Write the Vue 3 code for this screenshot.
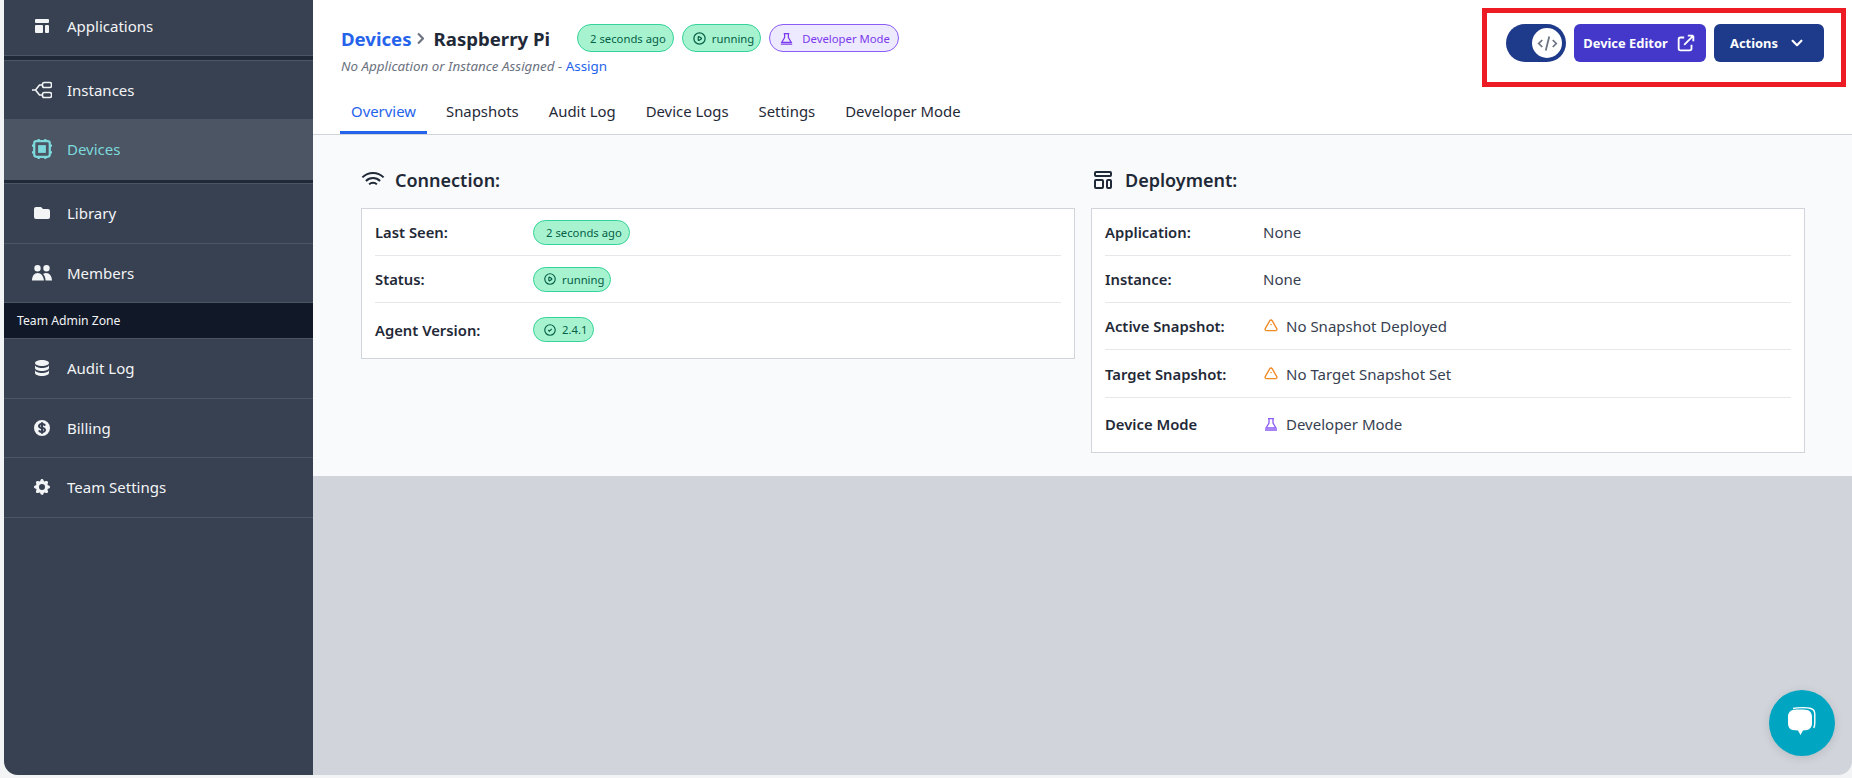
<script setup>
const icons = {
  template: ['M3 4a1 1 0 011-1h12a1 1 0 011 1v2a1 1 0 01-1 1H4a1 1 0 01-1-1V4zM3 10a1 1 0 011-1h6a1 1 0 011 1v6a1 1 0 01-1 1H4a1 1 0 01-1-1v-6zM14 9a1 1 0 00-1 1v6a1 1 0 001 1h2a1 1 0 001-1v-6a1 1 0 00-1-1h-2z'],
  folder: ['M2 6a2 2 0 012-2h5l2 2h5a2 2 0 012 2v6a2 2 0 01-2 2H4a2 2 0 01-2-2V6z'],
  users: [
    'M5.500 2a3.200 3.200 0 100 6.400 3.200 3.200 0 000-6.400zM14.500 2a3.200 3.200 0 100 6.400 3.200 3.200 0 000-6.400z',
    'M0 17.500c0-4.500 2.300-7.500 5.700-7.500s5.800 3 6.300 7.500zM13.600 17.500c-.2-2.800-1-5-2.500-6.600.9-.6 2-.9 3.100-.9 3.200 0 5.800 3 5.800 7.500z'
  ],
  database: [
    'M3 12v3c0 1.657 3.134 3 7 3s7-1.343 7-3v-3c0 1.657-3.134 3-7 3s-7-1.343-7-3z',
    'M3 7v3c0 1.657 3.134 3 7 3s7-1.343 7-3V7c0 1.657-3.134 3-7 3S3 8.657 3 7z',
    'M17 5c0 1.657-3.134 3-7 3S3 6.657 3 5s3.134-3 7-3 7 1.343 7 3z'
  ],
  dollar: [
    'M8.433 7.418c.155-.103.346-.196.567-.267v1.698a2.305 2.305 0 01-.567-.267C8.07 8.34 8 8.114 8 8c0-.114.07-.34.433-.582zM11 12.849v-1.698c.22.071.412.164.567.267.364.243.433.468.433.582 0 .114-.07.34-.433.582a2.305 2.305 0 01-.567.267z',
    'M10 18a8 8 0 100-16 8 8 0 000 16zm1-13a1 1 0 10-2 0v.092a4.535 4.535 0 00-1.676.662C6.602 6.234 6 7.009 6 8c0 .99.602 1.765 1.324 2.246.48.32 1.054.545 1.676.662v1.941c-.391-.127-.68-.317-.843-.504a1 1 0 10-1.51 1.31c.562.649 1.413 1.076 2.353 1.253V15a1 1 0 102 0v-.092a4.535 4.535 0 001.676-.662C13.398 13.766 14 12.991 14 12c0-.99-.602-1.765-1.324-2.246A4.535 4.535 0 0011 9.092V7.151c.391.127.68.317.843.504a1 1 0 101.511-1.31c-.563-.649-1.413-1.076-2.354-1.253V5z'
  ],
  cog: ['M11.49 3.17c-.38-1.56-2.6-1.56-2.98 0a1.532 1.532 0 01-2.286.948c-1.372-.836-2.942.734-2.106 2.106.54.886.061 2.042-.947 2.287-1.561.379-1.561 2.6 0 2.978a1.532 1.532 0 01.947 2.287c-.836 1.372.734 2.942 2.106 2.106a1.532 1.532 0 012.287.947c.379 1.561 2.6 1.561 2.978 0a1.533 1.533 0 012.287-.947c1.372.836 2.942-.734 2.106-2.106a1.533 1.533 0 01.947-2.287c1.561-.379 1.561-2.6 0-2.978a1.532 1.532 0 01-.947-2.287c.836-1.372-.734-2.942-2.106-2.106a1.532 1.532 0 01-2.287-.947zM10 13a3 3 0 100-6 3 3 0 000 6z']
}

const play = ['M14.752 11.168l-3.197-2.132A1 1 0 0010 9.87v4.263a1 1 0 001.555.832l3.197-2.132a1 1 0 000-1.664z', 'M21 12a9 9 0 11-18 0 9 9 0 0118 0z']
const check = ['M9 12l2 2 4-4m6 2a9 9 0 11-18 0 9 9 0 0118 0z']
const flask = ['M7.500 4h9M9 4v6.500L4.500 18h15L15 10.500V4M3 21h18']
const warn = ['M12 9v2m0 4h.01m-6.938 4h13.856c1.54 0 2.502-1.667 1.732-3L13.732 4c-.77-1.333-2.694-1.333-3.464 0L3.34 16c-.77 1.333.192 3 1.732 3z']

const tabs = ['Overview', 'Snapshots', 'Audit Log', 'Device Logs', 'Settings', 'Developer Mode']
const lowerNav = [
  { label: 'Library', icon: 'folder' },
  { label: 'Members', icon: 'users', size: 'short' }
]
const adminNav = [
  { label: 'Audit Log', icon: 'database' },
  { label: 'Billing', icon: 'dollar', size: 'short' },
  { label: 'Team Settings', icon: 'cog' }
]
const deployRows = [
  { label: 'Application:', value: 'None' },
  { label: 'Instance:', value: 'None' },
  { label: 'Active Snapshot:', value: 'No Snapshot Deployed', icon: warn, tone: 'warn' },
  { label: 'Target Snapshot:', value: 'No Target Snapshot Set', icon: warn, tone: 'warn', cls: 'tall' },
  { label: 'Device Mode', value: 'Developer Mode', icon: flask, tone: 'dev', cls: 'last snug' }
]
</script>

<template>
  <div class="screen">
    <aside class="sidebar">
      <a class="nav-item first">
        <svg class="nav-icon" viewBox="0 0 20 20" fill="currentColor"><path v-for="d in icons.template" :key="d" :d="d" fill-rule="evenodd" /></svg>
        Applications
      </a>
      <div class="nav-gap"></div>
      <a class="nav-item instances">
        <svg class="nav-icon" viewBox="0 0 20 20" fill="none" stroke="currentColor" stroke-width="1.600"><path d="M0 10h3.500l4-5h3M3.500 10l4 5h3" /><rect x="10.500" y="2.500" width="9" height="5" rx="1.800" /><rect x="10.500" y="12.500" width="9" height="5" rx="1.800" /></svg>
        Instances
      </a>
      <a class="nav-item active">
        <svg class="nav-icon" viewBox="3 3 18 18" fill="none" stroke="currentColor" stroke-width="2"><path d="M9 3v2m6-2v2M9 19v2m6-2v2M5 9H3m2 6H3m18-6h-2m2 6h-2M7 19h10a2 2 0 002-2V7a2 2 0 00-2-2H7a2 2 0 00-2 2v10a2 2 0 002 2z" /><rect x="8.500" y="8.500" width="7" height="7" fill="currentColor" stroke="none" /></svg>
        Devices
      </a>
      <div class="nav-gap thin"></div>
      <a v-for="item in lowerNav" :key="item.label" class="nav-item" :class="item.size">
        <svg class="nav-icon" viewBox="0 0 20 20" fill="currentColor"><path v-for="d in icons[item.icon]" :key="d" :d="d" fill-rule="evenodd" /></svg>
        {{ item.label }}
      </a>
      <div class="zone">Team Admin Zone</div>
      <a v-for="item in adminNav" :key="item.label" class="nav-item" :class="item.size">
        <svg class="nav-icon" viewBox="0 0 20 20" fill="currentColor"><path v-for="d in icons[item.icon]" :key="d" :d="d" fill-rule="evenodd" /></svg>
        {{ item.label }}
      </a>
    </aside>

    <main class="main">
      <header class="header">
        <div class="header-top">
          <div>
            <div class="title-row">
              <h1 class="title">
                <span class="crumb">Devices</span>
                <svg class="crumb-sep" viewBox="7.500 3 10 18" fill="none" stroke="currentColor" stroke-width="3"><path d="M9 5l7 7-7 7" /></svg>
                <span>Raspberry Pi</span>
              </h1>
              <div class="pills">
                <span class="pill plain">2 seconds ago</span>
                <span class="pill">
                  <svg viewBox="0 0 24 24" fill="none" stroke="currentColor" stroke-width="2"><path v-for="d in play" :key="d" :d="d" /></svg>
                  running
                </span>
                <span class="pill purple">
                  <svg viewBox="0 0 24 24" fill="none" stroke="currentColor" stroke-width="2"><path v-for="d in flask" :key="d" :d="d" /></svg>
                  Developer Mode
                </span>
              </div>
            </div>
            <p class="subtitle">No Application or Instance Assigned - <a>Assign</a></p>
          </div>
          <div class="actions">
            <span class="toggle">
              <span class="knob">
                <svg viewBox="0 0 24 24" fill="none" stroke="currentColor" stroke-width="2"><path d="M10 20l4-16m4 4l4 4-4 4M6 16l-4-4 4-4" /></svg>
              </span>
            </span>
            <button class="btn editor">
              Device Editor
              <svg viewBox="0 0 24 24" fill="none" stroke="currentColor" stroke-width="2"><path d="M10 6H6a2 2 0 00-2 2v10a2 2 0 002 2h10a2 2 0 002-2v-4M14 4h6m0 0v6m0-6L10 14" /></svg>
            </button>
            <button class="btn dark">
              Actions
              <svg viewBox="0 0 20 20" fill="currentColor"><path fill-rule="evenodd" d="M5.293 7.293a1 1 0 011.414 0L10 10.586l3.293-3.293a1 1 0 111.414 1.414l-4 4a1 1 0 01-1.414 0l-4-4a1 1 0 010-1.414z" /></svg>
            </button>
          </div>
        </div>
        <nav class="tabs">
          <a v-for="(tab, i) in tabs" :key="tab" class="tab" :class="{ current: i === 0 }">{{ tab }}</a>
        </nav>
      </header>

      <section class="content">
        <div class="column">
          <h2 class="card-title">
            <svg viewBox="0 0 24 24" fill="none" stroke="currentColor" stroke-width="2"><path d="M8.111 16.404a5.500 5.500 0 017.778 0M12 20h.01m-7.080-7.071c3.904-3.905 10.236-3.905 14.141 0M1.394 9.393c5.857-5.857 15.355-5.857 21.213 0" /></svg>
            Connection:
          </h2>
          <div class="card">
            <div class="row">
              <span class="label">Last Seen:</span>
              <span class="pill small plain">2 seconds ago</span>
            </div>
            <div class="row">
              <span class="label">Status:</span>
              <span class="pill small">
                <svg viewBox="0 0 24 24" fill="none" stroke="currentColor" stroke-width="2"><path v-for="d in play" :key="d" :d="d" /></svg>
                running
              </span>
            </div>
            <div class="row last">
              <span class="label">Agent Version:</span>
              <span class="pill small">
                <svg viewBox="0 0 24 24" fill="none" stroke="currentColor" stroke-width="2"><path v-for="d in check" :key="d" :d="d" /></svg>
                2.4.1
              </span>
            </div>
          </div>
        </div>

        <div class="column">
          <h2 class="card-title">
            <svg viewBox="0 0 24 24" fill="none" stroke="currentColor" stroke-width="2"><path d="M4 5a1 1 0 011-1h14a1 1 0 011 1v2a1 1 0 01-1 1H5a1 1 0 01-1-1V5zM4 13a1 1 0 011-1h6a1 1 0 011 1v6a1 1 0 01-1 1H5a1 1 0 01-1-1v-6zM16 13a1 1 0 011-1h2a1 1 0 011 1v6a1 1 0 01-1 1h-2a1 1 0 01-1-1v-6z" /></svg>
            Deployment:
          </h2>
          <div class="card">
            <div v-for="row in deployRows" :key="row.label" class="row" :class="row.cls">
              <span class="label">{{ row.label }}</span>
              <span class="value">
                <svg v-if="row.icon" :class="row.tone" viewBox="0 0 24 24" fill="none" stroke="currentColor" stroke-width="2"><path v-for="d in row.icon" :key="d" :d="d" /></svg>
                {{ row.value }}
              </span>
            </div>
          </div>
        </div>
      </section>
    </main>

    <!-- annotation drawn over the screenshot -->
    <div class="highlight"></div>

    <div class="chat">
      <svg viewBox="0 0 40 40" width="40" height="40">
        <path d="M11 5.500c5-1.200 14-1.200 18 0 3 .9 3.800 3 3.800 6v8c0 2.500-.3 4-1 5.500" fill="none" stroke="#fff" stroke-width="1.400" />
        <path d="M6 14c0-4 2-6.500 5-7 4-.6 10-.6 14 0 3 .5 5 3 5 7v6c0 4-2 6.500-5 7l-4 .5-2.500 4.500-2.500-4.500-5.500-.5c-3-.5-4.500-3-4.500-7z" fill="#fff" />
      </svg>
    </div>
  </div>
</template>

<style>
html, body {
  margin: 0;
  background: #f3f4f6;
}
</style>

<style scoped>
.screen {
  position: relative;
  display: flex;
  width: 1848px;
  height: 775px;
  margin-left: 4px;
  overflow: hidden;
  border-radius: 0 0 14px 14px;
  background: #d1d5db;
  font-family: "Noto Sans", "Open Sans", sans-serif;
  color: #1f2937;
}

.sidebar {
  width: 309px;
  flex-shrink: 0;
  background: #374151;
  color: #f3f4f6;
  font-size: 15px;
}

.nav-item {
  display: flex;
  align-items: center;
  gap: 15px;
  height: 60px;
  padding: 0 0 2px 28px;
  box-sizing: border-box;
  border-bottom: 1px solid #4b5563;
}

.nav-item.short {
  height: 59px;
  padding-bottom: 0;
}

.nav-item.first {
  height: 56px;
  padding-bottom: 4px;
}

.nav-item.instances {
  height: 58px;
  padding-bottom: 0;
  border-bottom: none;
}

.nav-item.active {
  height: 61px;
  background: #4b5563;
  color: #7dd9dc;
  border-bottom: none;
}

.nav-icon {
  width: 20px;
  height: 20px;
  flex-shrink: 0;
}

.nav-gap {
  height: 4px;
  background: #1f2937;
  border-bottom: 1px solid #4b5563;
}

.nav-gap.thin {
  height: 3px;
}

.zone {
  display: flex;
  align-items: center;
  height: 35px;
  padding-left: 13px;
  background: #111827;
  border-bottom: 1px solid #4b5563;
  color: #f3f4f6;
  font-size: 12.200px;
}

.main {
  flex: 1;
  min-width: 0;
  display: flex;
  flex-direction: column;
}

.header {
  height: 135px;
  box-sizing: border-box;
  background: #fff;
  border-bottom: 1px solid #d1d5db;
  padding: 24px 28px 0 28px;
}

.header-top {
  display: flex;
  justify-content: space-between;
  align-items: flex-start;
  height: 60px;
}

.title-row {
  display: flex;
  align-items: center;
  gap: 27px;
  height: 28px;
}

.title {
  display: flex;
  align-items: center;
  margin: 0;
  font-size: 18.600px;
  font-weight: 700;
  color: #1f2937;
  white-space: nowrap;
}

.crumb {
  color: #2563eb;
}

.crumb-sep {
  width: 7px;
  height: 13px;
  margin: 0 10px 0 5px;
  color: #6b7280;
}

.pills {
  display: flex;
  gap: 8px;
}

.pill {
  display: inline-flex;
  align-items: center;
  gap: 5px;
  height: 28px;
  box-sizing: border-box;
  padding: 0 6px 0 9px;
  border: 1px solid #34d399;
  border-radius: 14px;
  background: #a7f3d0;
  color: #065f46;
  font-size: 11.300px;
  white-space: nowrap;
}

.pill svg {
  width: 15px;
  height: 15px;
}

.pill.plain {
  padding: 0 7px 0 12px;
}

.pill.purple {
  gap: 8px;
  padding: 0 8px 0 9px;
  border-color: #8b5cf6;
  background: #ede9fe;
  color: #7c3aed;
}

.pill.small {
  height: 25px;
  border-radius: 13px;
}

.pill.small svg {
  width: 14px;
  height: 14px;
}

.subtitle {
  margin: 5px 0 0 0;
  font-size: 13.400px;
  font-style: italic;
  color: #6b7280;
}

.subtitle a {
  font-style: normal;
  color: #2563eb;
}

.actions {
  display: flex;
  align-items: center;
  gap: 8px;
}

.toggle {
  display: flex;
  align-items: center;
  justify-content: flex-end;
  width: 60px;
  height: 38px;
  box-sizing: border-box;
  padding-right: 4px;
  border-radius: 19px;
  background: #1e3a8a;
}

.knob {
  display: flex;
  align-items: center;
  justify-content: center;
  width: 30px;
  height: 30px;
  border-radius: 50%;
  background: #fff;
  color: #6b7280;
}

.knob svg {
  width: 21px;
  height: 21px;
}

.btn {
  display: inline-flex;
  align-items: center;
  justify-content: center;
  height: 38px;
  box-sizing: border-box;
  border: none;
  border-radius: 6px;
  color: #fff;
  font-family: inherit;
  font-size: 12.900px;
  font-weight: 700;
}

.btn svg {
  width: 22px;
  height: 22px;
}

.btn.editor {
  width: 132px;
  gap: 7px;
  background: #4338ca;
}

.btn.dark {
  width: 110px;
  gap: 8px;
  background: #1e3a8a;
}

.tabs {
  display: flex;
  gap: 8px;
  margin-left: -1px;
}

.tab {
  height: 50px;
  box-sizing: border-box;
  padding: 18px 11px 0;
  line-height: 18px;
  font-size: 14.900px;
  color: #1f2937;
}

.tab.current {
  color: #2563eb;
  border-bottom: 3px solid #2563eb;
}

.content {
  display: grid;
  grid-template-columns: 714px 714px;
  gap: 16px;
  height: 341px;
  box-sizing: border-box;
  padding: 29px 0 0 48px;
  background: #f9fafb;
}

.card-title {
  display: flex;
  align-items: center;
  gap: 10px;
  height: 32px;
  margin: 0 0 12px;
  font-size: 18px;
  font-weight: 600;
  color: #1f2937;
}

.card-title svg {
  width: 24px;
  height: 24px;
}

.card {
  box-sizing: border-box;
  padding: 0 13px;
  border: 1px solid #d1d5db;
  background: #fff;
}

.column {
  display: flex;
  flex-direction: column;
  align-items: stretch;
}

.row {
  display: flex;
  align-items: center;
  height: 47px;
  box-sizing: border-box;
  border-bottom: 1px solid #e5e7eb;
  font-size: 14.800px;
}

.row.tall {
  height: 48px;
}

.row.last {
  border-bottom: none;
  height: 55px;
  padding-bottom: 2px;
}

.row.last.snug {
  height: 54px;
}

.label {
  width: 158px;
  flex-shrink: 0;
  font-weight: 600;
  color: #1f2937;
}

.value {
  display: inline-flex;
  align-items: center;
  gap: 7px;
  font-size: 15px;
  color: #374151;
}

.value svg {
  width: 16px;
  height: 16px;
}

.value svg.warn {
  color: #f08a24;
}

.value svg.dev {
  color: #8b5cf6;
}

.highlight {
  position: absolute;
  left: 1478px;
  top: 8px;
  width: 364px;
  height: 79px;
  box-sizing: border-box;
  border: 5px solid #ed1c24;
  pointer-events: none;
}

.chat {
  position: absolute;
  left: 1765px;
  top: 690px;
  display: flex;
  align-items: center;
  justify-content: center;
  width: 66px;
  height: 66px;
  border-radius: 50%;
  background: #00a5c2;
  box-shadow: 0 2px 10px rgba(0, 0, 0, 0.12);
}
</style>
